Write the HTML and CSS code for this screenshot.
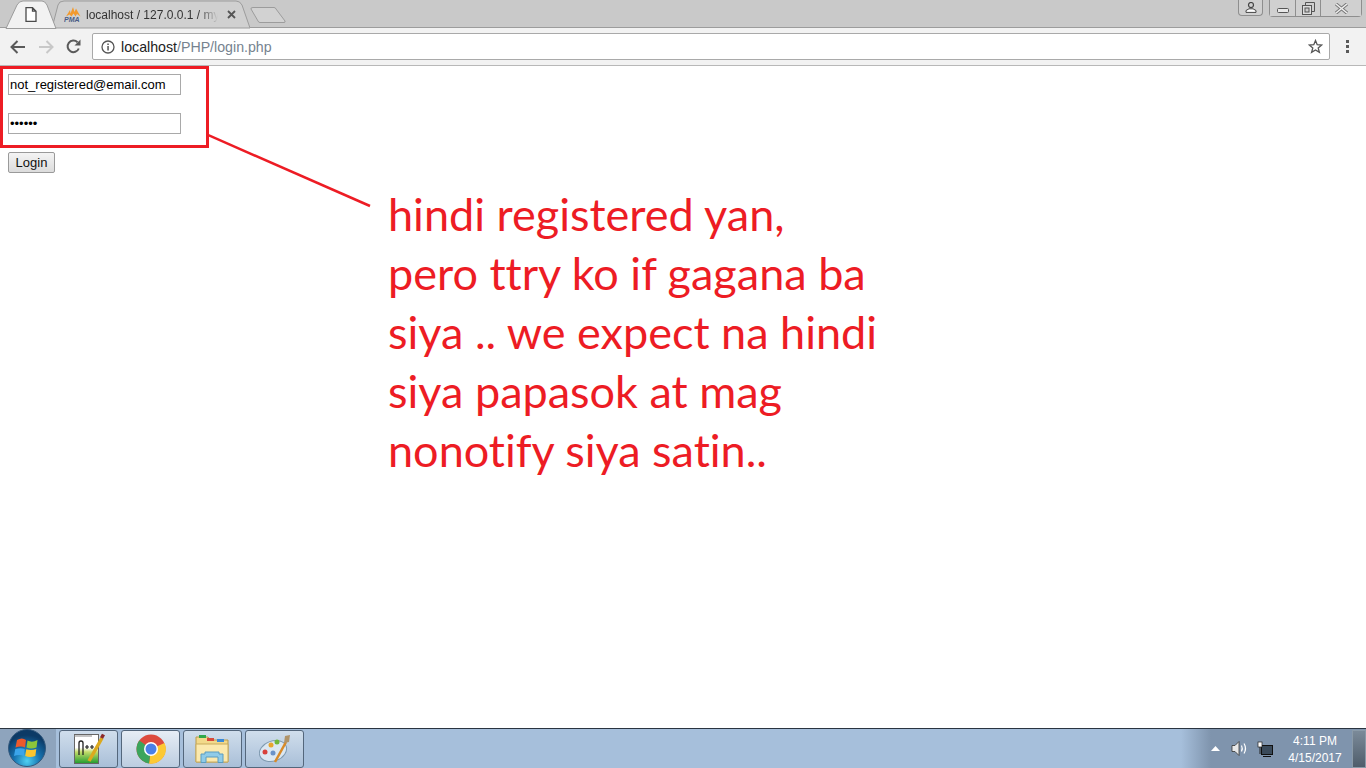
FILE: index.html
```html
<!DOCTYPE html>
<html lang="en">
	<head>
		<meta charset="UTF-8">
		<title>Login</title>
		<link rel="stylesheet" href="styles.css">
	</head>
	<body>
		<header class="chrome">
			<div class="tabstrip">
				<svg class="tab-shapes" width="300" height="29" viewBox="0 0 300 29">
					<path d="M52 28 L58 5 Q59 1 64 1 L236 1 Q240 1 242 5 L250 28Z" fill="#d0d0d0" stroke="#9c9c9c"/>
					<path d="M253 7.500 L274 7.500 Q275.500 7.500 276 9 L285 21 Q285.500 22.500 284 22.500 L260 22.500 Q258.500 22.500 258 21 L251 9 Q250.500 7.500 253 7.500Z" fill="#d2d2d2" stroke="#9c9c9c"/>
					<path d="M6 28.500 L17 5 Q19 1 23 1 L42 1 Q45 1 47 5 L56 28.500Z" fill="#f2f2f2" stroke="#9c9c9c"/>
				</svg>
				<div class="tab tab-active">
					<svg width="12" height="15" viewBox="0 0 12 15"><path d="M1 .7 H7.500 L11 4.200 V14.300 H1Z M7.500 .7 V4.200 H11" fill="#fff" stroke="#4a4a4a" stroke-width="1.300"/></svg>
				</div>
				<div class="tab tab-pma">
					<svg width="17" height="15" viewBox="0 0 17 15">
						<path d="M2 9.500 L6 3 L6.500 6.500 L9 0 L10.500 5 L12 1.500 L16.500 9.500 L13 7 L11.500 9.500 L9.500 6.500 L7.500 9.500 L5.500 7.500Z" fill="#f29a2e"/>
						<text class="pma-mark" x="0" y="15">PMA</text>
					</svg>
					<span class="tab-title">localhost / 127.0.0.1 / my</span>
					<svg class="tab-close" width="9" height="9" viewBox="0 0 9 9"><path d="M1 1 L8 8 M8 1 L1 8" stroke="#555" stroke-width="1.800"/></svg>
				</div>
				<div class="win-controls">
					<div class="win-btn win-user">
						<svg width="12" height="11" viewBox="0 0 12 11"><circle cx="6" cy="3" r="2.500" fill="none" stroke="#444" stroke-width="1.200"/><path d="M1 10.400 V8.500 L4 6.800 H8 L11 8.500 V10.400Z" fill="#fff" stroke="#444"/></svg>
					</div>
					<div class="win-group">
						<div class="win-btn win-min"><svg width="12" height="6" viewBox="0 0 12 6"><rect x=".5" y=".5" width="11" height="4" rx="1" fill="#e8e8e8" stroke="#555"/></svg></div>
						<div class="win-btn win-max"><svg width="13" height="13" viewBox="0 0 13 13"><path d="M3.500 3 V.5 H12.500 V9.500 H10" fill="none" stroke="#555"/><rect x=".5" y="3.500" width="9" height="9" fill="#ddd" stroke="#555"/><rect x="3" y="6" width="4" height="4" fill="#ccc" stroke="#555"/></svg></div>
						<div class="win-btn win-close"><svg width="15" height="11" viewBox="0 0 15 11"><path d="M2 1 L13 10 M13 1 L2 10" stroke="#777" stroke-width="3.400"/><path d="M2 1 L13 10 M13 1 L2 10" stroke="#eee" stroke-width="1.600"/></svg></div>
					</div>
				</div>
			</div>
			<div class="toolbar">
				<svg class="nav-icon" width="16" height="14" viewBox="0 0 16 14"><path d="M15 7 H2 M7.500 1 L1.500 7 L7.500 13" fill="none" stroke="#5a5a5a" stroke-width="2"/></svg>
				<svg class="nav-icon" width="16" height="14" viewBox="0 0 16 14"><path d="M1 7 H14 M8.500 1 L14.500 7 L8.500 13" fill="none" stroke="#c8c8c8" stroke-width="2"/></svg>
				<svg class="nav-icon" width="15" height="15" viewBox="0 0 15 15"><path d="M12.800 9.500 A5.800 5.800 0 1 1 11.500 3.200" fill="none" stroke="#5a5a5a" stroke-width="2"/><path d="M8.500 6.500 H14.500 V.5Z" fill="#5a5a5a"/></svg>
				<div class="omnibox">
					<svg width="14" height="14" viewBox="0 0 14 14"><circle cx="7" cy="7" r="6" fill="none" stroke="#555" stroke-width="1.300"/><rect x="6.300" y="6" width="1.500" height="4.500" fill="#555"/><rect x="6.300" y="3.500" width="1.500" height="1.500" fill="#555"/></svg>
					<span class="url"><span class="url-host">localhost</span>/PHP/login.php</span>
					<svg class="star" width="15" height="15" viewBox="0 0 15 15"><path d="M7.500 1.500 L9.200 5.700 L13.800 6 L10.200 8.900 L11.400 13.400 L7.500 10.900 L3.600 13.400 L4.800 8.900 L1.200 6 L5.800 5.700Z" fill="none" stroke="#555" stroke-width="1.300"/></svg>
				</div>
				<div class="menu-dots"><i></i><i></i><i></i></div>
			</div>
		</header>

		<main class="page">
			<form class="login-form">
				<input class="field" type="text" value="not_registered@email.com">
				<input class="field" type="password" value="secret">
				<button class="login-btn" type="button">Login</button>
			</form>
			<div class="mark-box"></div>
			<svg class="mark-line" width="170" height="80" viewBox="0 0 170 80"><path d="M0 1 L162 72" stroke="#ed1c24" stroke-width="2.500"/></svg>
			<p class="note">hindi registered yan,<br>pero ttry ko if gagana ba<br>siya .. we expect na hindi<br>siya papasok at mag<br>nonotify siya satin..</p>
		</main>

		<footer class="taskbar">
			<div class="start">
				<svg width="38" height="38" viewBox="0 0 38 38">
					<defs>
						<radialGradient id="orb" cx="50%" cy="85%" r="70%"><stop offset="0" stop-color="#4fd0f2"/><stop offset=".5" stop-color="#1673b0"/><stop offset="1" stop-color="#0c3a66"/></radialGradient>
					</defs>
					<circle cx="19" cy="19" r="18.500" fill="url(#orb)" stroke="#33587c"/>
					<path d="M9 11 Q14 8 18 11 L17 18.500 Q13 16.500 7.500 18.500Z" fill="#ec5a2c"/>
					<path d="M19.500 11.500 Q24 14 29.500 11 L28.500 18.500 Q23 20.500 18.500 18.500Z" fill="#8cc63a"/>
					<path d="M7.300 20 Q12.500 18.500 16.800 20 L15.800 27 Q11.500 25 6 27Z" fill="#3ba5ea"/>
					<path d="M18.300 20.300 Q23 22 28.300 20 L27.300 27 Q22 29 17.200 27Z" fill="#fac52e"/>
				</svg>
			</div>
			<div class="task-btn">
				<svg width="34" height="34" viewBox="0 0 34 34">
					<defs><linearGradient id="npp" x1="0" y1="0" x2="0" y2="1"><stop offset=".45" stop-color="#fff"/><stop offset=".6" stop-color="#c4dc6a"/><stop offset="1" stop-color="#1f9a2e"/></linearGradient></defs>
					<rect x="2.500" y="2.500" width="24" height="29" fill="url(#npp)" stroke="#666"/>
					<path d="M2.500 4 H20" stroke="#888" stroke-dasharray="1 1" stroke-width="2"/>
					<path d="M7 23 V11 Q7 9 9 9 Q11 9 11 11 V23" fill="none" stroke="#222" stroke-width="1.300"/>
					<path d="M13 15 H17 M15 13 V17 M18 15 H22 M20 13 V17" fill="none" stroke="#222" stroke-width="1.200"/>
					<path d="M17 29 L30 6" stroke="#dca91e" stroke-width="3.500"/>
					<path d="M29.500 6 L31.500 2.500" stroke="#8c2a2a" stroke-width="3.500"/>
				</svg>
			</div>
			<div class="task-btn task-btn-on">
				<svg width="30" height="30" viewBox="0 0 30 30">
					<circle cx="15" cy="15" r="14.500" fill="#dd4b3e"/>
					<path d="M15 15 L28.500 9 A14.500 14.500 0 0 1 13 29.400Z" fill="#fcc934"/>
					<path d="M15 15 L13 29.400 A14.500 14.500 0 0 1 3.300 6.500Z" fill="#3ba55c"/>
					<circle cx="15" cy="15" r="7" fill="#fff"/>
					<circle cx="15" cy="15" r="5.500" fill="#4a80e8"/>
				</svg>
			</div>
			<div class="task-btn">
				<svg width="36" height="31" viewBox="0 0 36 31">
					<path d="M1 4 H13 L15 7 H33 V29 H1Z" fill="#f2d98a" stroke="#b89a4c"/>
					<rect x="4" y="2" width="7" height="3" fill="#2fa84a"/>
					<rect x="12" y="5" width="7" height="3" fill="#d84a3a"/>
					<rect x="22" y="6" width="7" height="3" fill="#3a8ad8"/>
					<path d="M1 11 H33 V29 H1Z" fill="#fbe9ae" stroke="#c9ab5c"/>
					<path d="M6 29.500 V21 H10 V19 H24 V21 H28 V29.500 H23 V24 H11 V29.500Z" fill="#8fcbe8" stroke="#5a9cc0"/>
				</svg>
			</div>
			<div class="task-btn">
				<svg width="32" height="30" viewBox="0 0 32 30">
					<ellipse cx="14" cy="17" rx="14" ry="10" transform="rotate(-20 14 17)" fill="#dce8f2" stroke="#7f9ab0"/>
					<circle cx="6" cy="18" r="2.500" fill="#d8413a"/>
					<circle cx="12" cy="11" r="2.500" fill="#e8a52e"/>
					<circle cx="18" cy="8" r="2.500" fill="#6fb83a"/>
					<circle cx="14" cy="19" r="2.500" fill="#6a92c8"/>
					<path d="M16 28 L27 8" stroke="#d88a28" stroke-width="2.500"/>
					<path d="M25 9 L26 2 L31 1 L30 8Z" fill="#b0946a"/>
				</svg>
			</div>
			<div class="tray">
				<svg width="9" height="5" viewBox="0 0 9 5"><path d="M0 5 L4.500 0 L9 5Z" fill="#fff"/></svg>
				<svg width="17" height="17" viewBox="0 0 17 17"><path d="M1 5.500 H4 L8 1.500 V15.500 L4 11.500 H1Z" fill="#e8e8e8" stroke="#333" stroke-width=".8"/><path d="M10.500 5.500 Q12 8.500 10.500 11.500 M13 3.500 Q16 8.500 13 13.500" fill="none" stroke="#fff" stroke-width="1.200"/></svg>
				<svg class="tray-net" width="16" height="16" viewBox="0 0 16 16"><rect x="4.500" y="4.500" width="11" height="9" fill="#3a4a5a" stroke="#111"/><path d="M6 15.500 H14" stroke="#111"/><rect x="1" y="1" width="4" height="5" fill="#fff" stroke="#222" stroke-width=".7"/><path d="M3 6 V13" stroke="#222"/></svg>
				<div class="clock"><span>4:11 PM</span><span>4/15/2017</span></div>
				<div class="show-desktop"></div>
			</div>
		</footer>
	</body>
</html>
```

FILE: styles.css
```css
html, body {
	margin: 0;
	padding: 0;
	height: 100%;
	overflow: hidden;
}
body {
	display: flex;
	flex-direction: column;
	height: 768px;
	background: #fff;
	font-family: "Liberation Sans", Arial, sans-serif;
}
.chrome {
	flex: none;
}
.tabstrip {
	position: relative;
	display: flex;
	height: 27px;
	background: #c9c9c9;
	border-bottom: 1px solid #9c9c9c;
}
.tab-shapes {
	position: absolute;
	left: 0;
	top: 0;
}
.tab {
	position: relative;
	display: flex;
	align-items: center;
	height: 29px;
}
.tab-active {
	width: 64px;
	padding-left: 25px;
	box-sizing: border-box;
}
.tab-pma {
	width: 172px;
}
.pma-mark {
	font-family: "Liberation Sans", Arial, sans-serif;
	font-size: 7px;
	font-weight: bold;
	font-style: italic;
	fill: #4a5c86;
}
.tab-title {
	width: 132px;
	margin-left: 5px;
	overflow: hidden;
	white-space: nowrap;
	font-size: 12px;
	color: #333;
	-webkit-mask-image: linear-gradient(90deg, #000 85%, transparent 100%);
	mask-image: linear-gradient(90deg, #000 85%, transparent 100%);
}
.tab-close {
	margin-left: 9px;
}
.win-controls {
	position: relative;
	display: flex;
	gap: 6px;
	margin-left: auto;
	margin-right: 4px;
	height: 17px;
}
.win-btn {
	display: flex;
	align-items: center;
	justify-content: center;
	height: 16px;
	box-sizing: border-box;
	background: #d0d0d0;
}
.win-user {
	width: 25px;
	border: 1px solid #8e8e8e;
	border-top: 0;
	border-radius: 0 0 4px 4px;
}
.win-group {
	display: flex;
	border: 1px solid #8e8e8e;
	border-top: 0;
	border-radius: 0 0 4px 4px;
}
.win-min {
	width: 25px;
	padding-top: 5px;
}
.win-max {
	width: 25px;
	border-left: 1px solid #8e8e8e;
}
.win-close {
	width: 41px;
	border-left: 1px solid #8e8e8e;
}
.toolbar {
	display: flex;
	align-items: center;
	height: 37px;
	padding-left: 10px;
	background: #f2f2f2;
	border-bottom: 1px solid #b8b8b8;
}
.nav-icon {
	margin-right: 12px;
}
.nav-icon:nth-child(3) {
	margin-right: 11px;
}
.omnibox {
	display: flex;
	align-items: center;
	width: 1238px;
	height: 27px;
	box-sizing: border-box;
	padding: 0 6px 0 8px;
	background: #fff;
	border: 1px solid #a9a9a9;
	border-radius: 2px;
}
.url {
	margin-left: 6px;
	font-size: 14.200px;
	color: #76838f;
}
.url-host {
	color: #222;
}
.star {
	margin-left: auto;
}
.menu-dots {
	display: flex;
	flex-direction: column;
	gap: 2px;
	margin-left: 16px;
}
.menu-dots i {
	width: 3px;
	height: 3px;
	background: #5a5a5a;
}
.page {
	position: relative;
	flex: 1;
}
.login-form {
	display: flex;
	flex-direction: column;
	align-items: flex-start;
	padding: 8px 0 0 8px;
}
.field {
	width: 173px;
	height: 21px;
	box-sizing: border-box;
	margin: 0 0 18px;
	padding: 1px;
	border: 1px solid #a9a9a9;
	font-family: "Liberation Sans", Arial, sans-serif;
	font-size: 13px;
	color: #000;
	background: #fff;
}
.login-btn {
	width: 47px;
	height: 21px;
	padding: 0;
	border: 1px solid #9a9a9a;
	border-radius: 2px;
	background: linear-gradient(#f4f4f4, #dcdcdc);
	font-family: "Liberation Sans", Arial, sans-serif;
	font-size: 13px;
	color: #111;
}
.mark-box {
	position: absolute;
	left: 0;
	top: 0;
	width: 203px;
	height: 76px;
	border: 3px solid #ed1c24;
}
.mark-line {
	position: absolute;
	left: 208px;
	top: 68px;
}
.note {
	position: absolute;
	left: 388px;
	top: 119px;
	margin: 0;
	font-family: Lato, sans-serif;
	font-size: 45px;
	font-variant-ligatures: none;
	line-height: 59px;
	color: #ed1c24;
	white-space: nowrap;
}
.taskbar {
	flex: none;
	display: flex;
	align-items: center;
	gap: 3px;
	height: 40px;
	box-sizing: border-box;
	background: #a6bfdb;
	border-top: 1px solid #2a3440;
}
.start {
	width: 56px;
	height: 39px;
	padding-left: 8px;
	box-sizing: border-box;
	background: #8ea4bd;
}
.task-btn {
	display: flex;
	align-items: center;
	justify-content: center;
	width: 59px;
	height: 38px;
	box-sizing: border-box;
	border: 1px solid #54677c;
	border-radius: 3px;
	background: linear-gradient(#d0deec, #a9bfd8);
}
.task-btn-on {
	background: linear-gradient(#e6edf5, #bccde0);
}
.tray {
	display: flex;
	align-items: center;
	gap: 11px;
	height: 39px;
	margin-left: auto;
	padding-left: 30px;
	color: #fff;
	background: linear-gradient(90deg, #a6bfdb, #7f94ad 30px);
}
.tray-net {
	margin-left: -2px;
}
.clock {
	display: flex;
	flex-direction: column;
	align-items: center;
	gap: 3px;
	width: 54px;
	padding-top: 2px;
	margin-left: 4px;
	font-size: 12px;
	color: #fff;
}
.show-desktop {
	width: 14px;
	height: 38px;
	margin-left: -1px;
	border: 1px solid #8a9aa8;
	box-sizing: border-box;
	background: linear-gradient(#7b8a99, #4f5d6b);
}
```
